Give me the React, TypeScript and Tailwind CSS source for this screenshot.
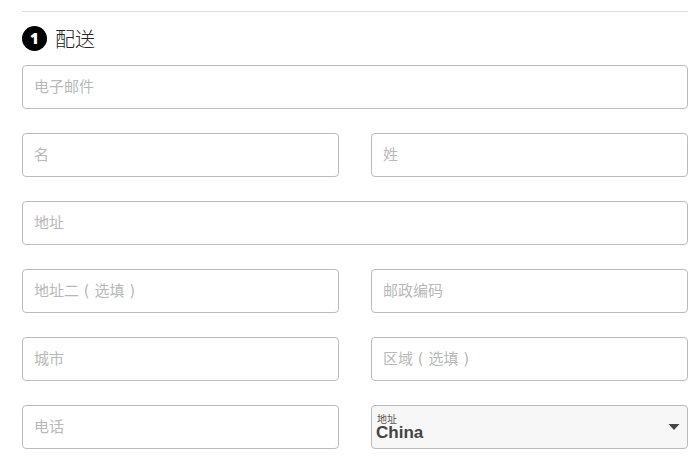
import { useState } from 'react';

type FieldProps = {
  name: string;
  label: string;
  type?: string;
  wide?: boolean;
};

const FIELDS: FieldProps[] = [
  { name: 'email', label: '电子邮件', type: 'email', wide: true },
  { name: 'firstName', label: '名' },
  { name: 'lastName', label: '姓' },
  { name: 'address1', label: '地址', wide: true },
  { name: 'address2', label: '地址二 ( 选填 )' },
  { name: 'postcode', label: '邮政编码' },
  { name: 'city', label: '城市' },
  { name: 'region', label: '区域 ( 选填 )' },
  { name: 'phone', label: '电话', type: 'tel' },
];

function Field({ name, label, type = 'text', wide }: FieldProps) {
  return (
    <input
      id={name}
      name={name}
      type={type}
      aria-label={label}
      placeholder={label}
      className={`h-11 w-full min-w-0 rounded border border-[#bbb] bg-white px-[11px] font-['DejaVu_Sans','Noto_Sans_CJK_SC',sans-serif] text-[15px] text-[#333] placeholder:text-[#b8b8b8] focus:outline-none focus:border-black ${wide ? 'col-span-2' : ''}`}
    />
  );
}

export default function App() {
  const [country, setCountry] = useState('CN');

  return (
    <main className="bg-white pl-[22px] pr-[7px] pt-[11px] pb-5 font-['Liberation_Sans','Noto_Sans_CJK_SC',sans-serif] antialiased">
      <form className="border-t border-[#ddd]">
        <h2 className="flex items-center gap-2 pt-3 pb-3 font-['Noto_Sans_CJK_SC',sans-serif] text-xl leading-[29px] font-light text-[#222]">
          <span className="flex size-[25px] items-center justify-center rounded-full bg-black font-['Open_Sans',sans-serif] text-[15px] font-extrabold text-white">1</span>
          配送
        </h2>
        <div className="grid grid-cols-2 gap-x-8 gap-y-6">
          {FIELDS.map(f => <Field key={f.name} {...f} />)}

          <div className="relative h-11 rounded border border-[#bbb] bg-[#f7f7f7]">
            <label htmlFor="country" className="pointer-events-none absolute left-[5px] top-2 text-[10px] leading-3 text-[#555]">
              地址
            </label>
            <select
              id="country"
              value={country}
              onChange={e => setCountry(e.target.value)}
              className="h-full w-full appearance-none bg-transparent pl-1 pr-8 pt-3 text-[17px] font-bold text-[#444] focus:outline-none"
            >
              <option value="CN">China</option>
            </select>
            <svg viewBox="0 0 12 6" className="pointer-events-none absolute right-[7px] top-[18px] h-[6px] w-3 fill-[#444]" aria-hidden="true">
              <path d="M0.5 0h11L6 6z" />
            </svg>
          </div>
        </div>
      </form>
    </main>
  );
}
